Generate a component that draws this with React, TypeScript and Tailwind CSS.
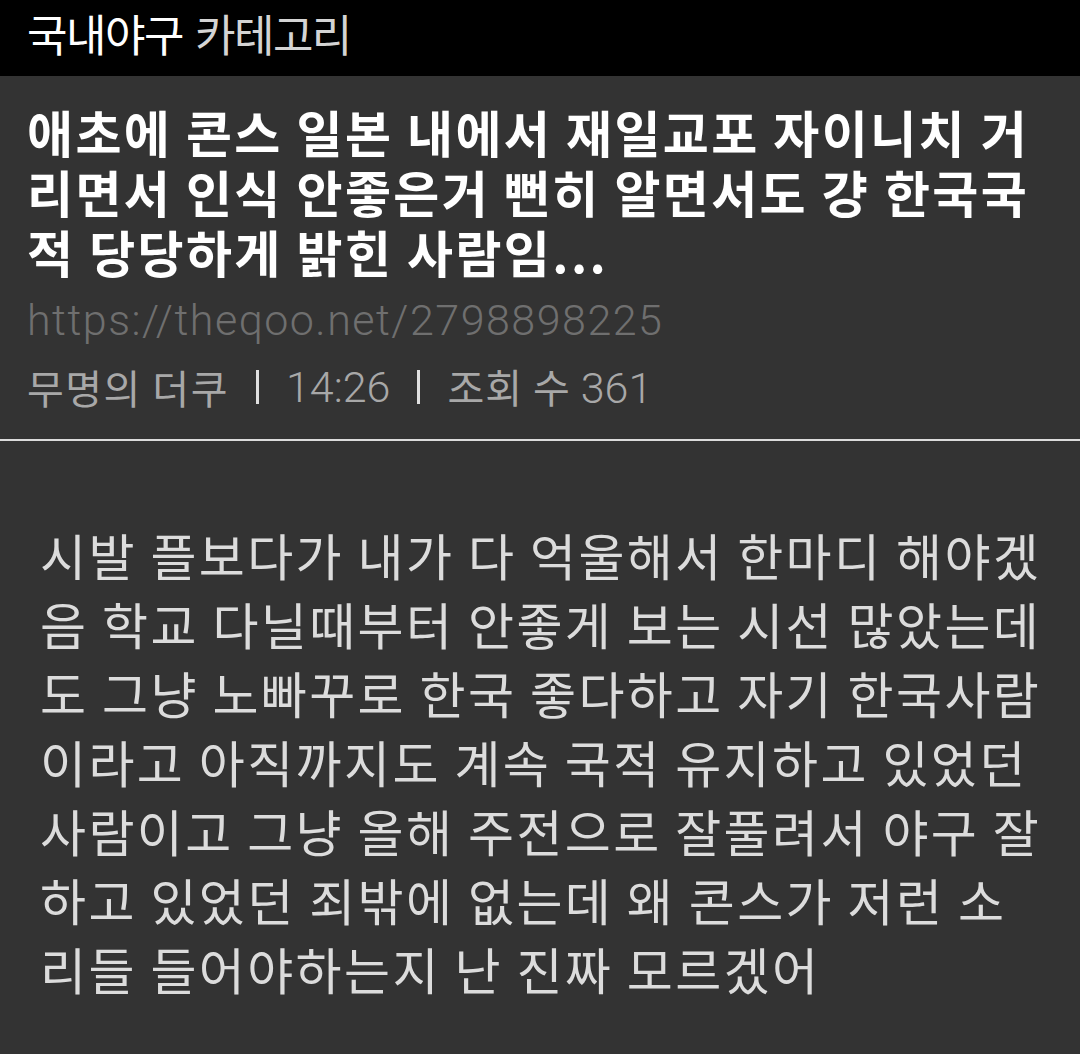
export default function App() {
    const titleLines = [
        "애초에 콘스 일본 내에서 재일교포 자이니치 거",
        "리면서 인식 안좋은거 뻔히 알면서도 걍 한국국",
        "적 당당하게 밝힌 사람임...",
    ];
    const bodyLines = [
        "시발 플보다가 내가 다 억울해서 한마디 해야겠",
        "음 학교 다닐때부터 안좋게 보는 시선 많았는데",
        "도 그냥 노빠꾸로 한국 좋다하고 자기 한국사람",
        "이라고 아직까지도 계속 국적 유지하고 있었던",
        "사람이고 그냥 올해 주전으로 잘풀려서 야구 잘",
        "하고 있었던 죄밖에 없는데 왜 콘스가 저런 소",
        "리들 들어야하는지 난 진짜 모르겠어",
    ];

    return (
        <div className="w-[1080px] h-[1054px] overflow-hidden bg-[#333333] font-['Noto_Sans_CJK_KR','Noto_Sans',sans-serif]">
            {/* top bar */}
            <div className="h-[76px] bg-black flex items-center px-[27px] pb-[10px] text-[44px] leading-none tracking-[-1.5px]">
                <span className="text-white">국내야구</span>
                <span className="ml-[12px] text-[#d4d4d4]">카테고리</span>
            </div>

            {/* post header */}
            <div className="px-[27px] pt-[25px] pb-[22px] border-b-2 border-[#dcdcdc]">
                <div className="text-white font-bold text-[50px] leading-[60px] tracking-[2.4px] whitespace-nowrap">
                    {titleLines.map((l) => (
                        <div key={l}>{l}</div>
                    ))}
                </div>
                <div className="mt-[10px] text-[#6f6f6f] text-[43px] leading-[58px] tracking-[1.5px] font-['Roboto',sans-serif] font-light">
                    https://theqoo.net/2798898225
                </div>
                <div className="mt-[8px] flex items-center text-[#a8a8a8] text-[40px] leading-[58px] tracking-[1.5px]">
                    <span>무명의 더쿠</span>
                    <span className="mx-[27px] w-[3px] h-[34px] bg-[#e0e0e0]" />
                    <span className="text-[43px] tracking-[0px] font-['Roboto',sans-serif] font-light">14:26</span>
                    <span className="mx-[27px] w-[3px] h-[34px] bg-[#e0e0e0]" />
                    <span className="tracking-[1px]">
                        조회 수 <span className="text-[43px] tracking-[0px] font-['Roboto',sans-serif] font-light">361</span>
                    </span>
                </div>
            </div>

            {/* body */}
            <div className="px-[40px] pt-[79px] text-[#dcdcdc] text-[50px] leading-[69px] tracking-[2.4px] whitespace-nowrap">
                {bodyLines.map((l) => (
                    <div key={l}>{l}</div>
                ))}
            </div>
        </div>
    );
}
